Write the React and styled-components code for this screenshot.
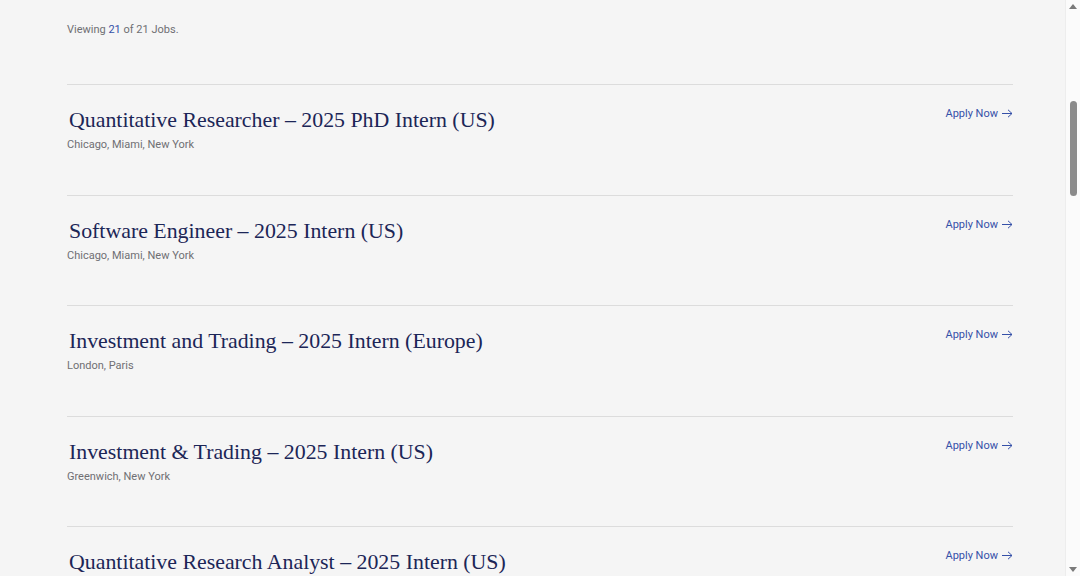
import styled, { createGlobalStyle } from "styled-components";

const jobs = [
  { title: "Quantitative Researcher – 2025 PhD Intern (US)", places: "Chicago, Miami, New York" },
  { title: "Software Engineer – 2025 Intern (US)", places: "Chicago, Miami, New York" },
  { title: "Investment and Trading – 2025 Intern (Europe)", places: "London, Paris" },
  { title: "Investment & Trading – 2025 Intern (US)", places: "Greenwich, New York" },
  { title: "Quantitative Research Analyst – 2025 Intern (US)", places: "Chicago, New York" },
];

const GlobalStyle = createGlobalStyle`
  body {
    margin: 0;
    height: 576px;
    overflow: hidden;
    background: #f5f5f5;
    font-family: Roboto, "Liberation Sans", sans-serif;
  }
`;

const Page = styled.main`
  padding: 23px 67px 0 67px;
`;

const Count = styled.p`
  margin: 0 0 47px;
  font-size: 11px;
  line-height: 14px;
  color: #6f6f73;
  span {
    color: #3550a8;
  }
`;

const List = styled.ul`
  list-style: none;
  margin: 0;
  padding: 0;
`;

const Row = styled.li`
  border-top: 1px solid #dcdcdc;
  height: 110.5px;
  box-sizing: border-box;
  padding-top: 21px;
  display: flex;
  justify-content: space-between;
  align-items: flex-start;
`;

const Title = styled.h2`
  margin: 0 0 4px 2px;
  font-family: "Liberation Serif", serif;
  font-weight: 400;
  font-size: 21.85px;
  line-height: 28px;
  color: #1c2657;
`;

const Places = styled.div`
  font-size: 11px;
  line-height: 14px;
  color: #6f6f73;
`;

const Apply = styled.a`
  margin-top: 1px;
  display: flex;
  align-items: center;
  gap: 4px;
  font-size: 11px;
  color: #3550a8;
  text-decoration: none;
`;

const Scrollbar = styled.div`
  position: fixed;
  top: 0;
  right: 0;
  width: 15px;
  height: 576px;
  background: #fbfbfb;
  border-left: 1px solid #ededed;
  box-sizing: border-box;
`;

const Thumb = styled.div`
  position: absolute;
  left: 4px;
  top: 101px;
  width: 7px;
  height: 95px;
  border-radius: 4px;
  background: #8b8b8b;
`;

const ArrowTip = styled.div`
  position: absolute;
  left: 3px;
  ${(p) => (p.$down ? "bottom: 4px;" : "top: 4px;")}
  width: 0;
  height: 0;
  border-left: 4px solid transparent;
  border-right: 4px solid transparent;
  ${(p) => (p.$down ? "border-top: 5px solid #7a7a7a;" : "border-bottom: 5px solid #7a7a7a;")}
`;

const Arrow = () => (
  <svg width="11" height="9" viewBox="0 0 11 9" fill="none" stroke="#3550a8" strokeWidth="1">
    <path d="M0 4.5h10M6 0.8l4 3.7-4 3.7" />
  </svg>
);

export default function App() {
  return (
    <>
      <GlobalStyle />
      <Page>
        <Count>
          Viewing <span>21</span> of 21 Jobs.
        </Count>
        <List>
          {jobs.map((job) => (
            <Row key={job.title}>
              <div>
                <Title>{job.title}</Title>
                <Places>{job.places}</Places>
              </div>
              <Apply href="#">
                Apply Now <Arrow />
              </Apply>
            </Row>
          ))}
        </List>
      </Page>
      <Scrollbar>
        <ArrowTip />
        <Thumb />
        <ArrowTip $down />
      </Scrollbar>
    </>
  );
}
